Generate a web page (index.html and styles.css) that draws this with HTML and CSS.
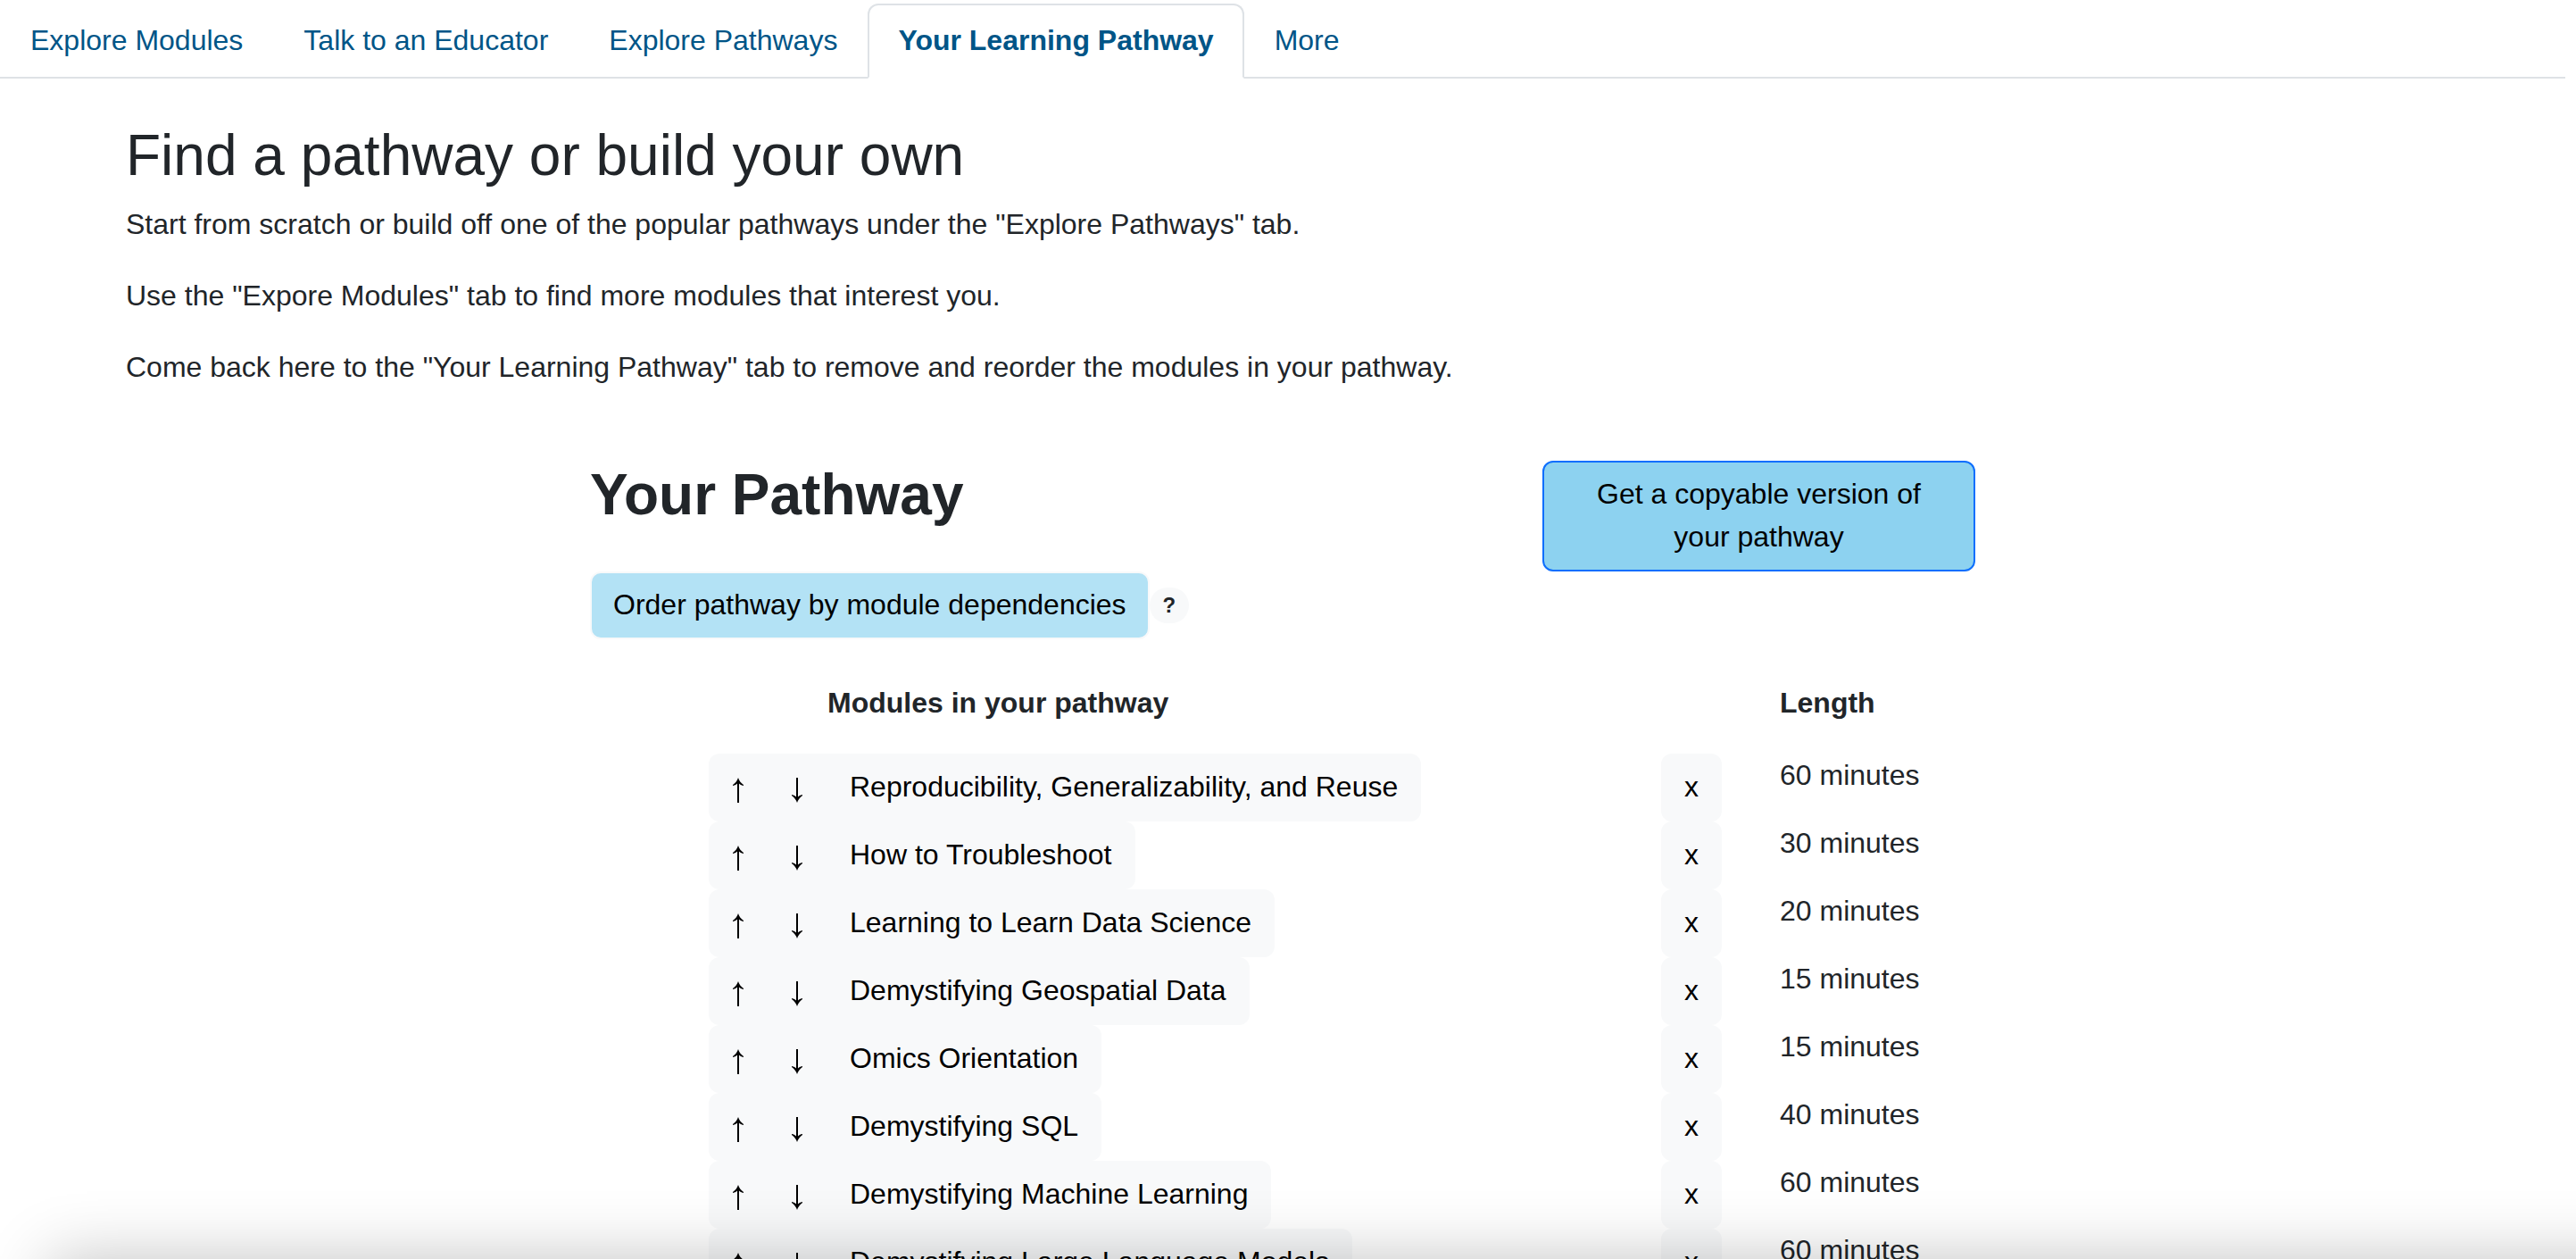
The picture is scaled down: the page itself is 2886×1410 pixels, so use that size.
FILE: index.html
```html
<!DOCTYPE html>
<html lang="en">
<head>
<meta charset="utf-8">
<meta name="viewport" content="width=device-width, initial-scale=1">
<title>Your Learning Pathway</title>
<link rel="stylesheet" href="styles.css">
</head>
<body>
<svg class="sprite" aria-hidden="true">
  <symbol id="up" viewBox="0 0 14 28"><path d="M7 0C6 3 4 6 1 8V9C3.500 8.500 5 7.500 6 6.500V28H8V6.500C9 7.500 10.500 8.500 13 9V8C10 6 8 3 7 0Z"/></symbol>
  <symbol id="down" viewBox="0 0 14 28"><path d="M7 28C6 25 4 22 1 20V19C3.500 19.500 5 20.500 6 21.500V0H8V21.500C9 20.500 10.500 19.500 13 19V20C10 22 8 25 7 28Z"/></symbol>
</svg>
<nav class="tabs">
  <a class="tab" href="#modules">Explore Modules</a>
  <a class="tab" href="#educator">Talk to an Educator</a>
  <a class="tab" href="#pathways">Explore Pathways</a>
  <a class="tab tab-active" href="#pathway" aria-current="page">Your Learning Pathway</a>
  <a class="tab" href="#more">More</a>
</nav>
<main class="page">
  <section class="intro">
    <h2 class="title">Find a pathway or build your own</h2>
    <p>Start from scratch or build off one of the popular pathways under the "Explore Pathways" tab.</p>
    <p>Use the "Expore Modules" tab to find more modules that interest you.</p>
    <p>Come back here to the "Your Learning Pathway" tab to remove and reorder the modules in your pathway.</p>
  </section>
  <section class="pathway" id="pathway">
    <div class="pathway-head">
      <h1 class="title title-bold">Your Pathway</h1>
      <button class="btn btn-copy" type="button">Get a copyable version of your pathway</button>
    </div>
    <div class="order">
      <button class="btn btn-order" type="button">Order pathway by module dependencies</button>
      <span class="badge">?</span>
    </div>
    <table class="modules">
      <colgroup><col class="col-name"><col class="col-remove"><col></colgroup>
      <thead>
        <tr><th class="th-name" scope="col">Modules in your pathway</th><td></td><th scope="col">Length</th></tr>
      </thead>
      <tbody>
        <tr>
          <td><div class="module"><button class="btn btn-arrow" type="button" aria-label="Move up"><svg class="arrow"><use href="#up"/></svg></button><button class="btn btn-arrow" type="button" aria-label="Move down"><svg class="arrow"><use href="#down"/></svg></button><button class="btn" type="button">Reproducibility, Generalizability, and Reuse</button></div></td>
          <td><button class="btn" type="button">x</button></td>
          <td>60 minutes</td>
        </tr>
        <tr>
          <td><div class="module"><button class="btn btn-arrow" type="button" aria-label="Move up"><svg class="arrow"><use href="#up"/></svg></button><button class="btn btn-arrow" type="button" aria-label="Move down"><svg class="arrow"><use href="#down"/></svg></button><button class="btn" type="button">How to Troubleshoot</button></div></td>
          <td><button class="btn" type="button">x</button></td>
          <td>30 minutes</td>
        </tr>
        <tr>
          <td><div class="module"><button class="btn btn-arrow" type="button" aria-label="Move up"><svg class="arrow"><use href="#up"/></svg></button><button class="btn btn-arrow" type="button" aria-label="Move down"><svg class="arrow"><use href="#down"/></svg></button><button class="btn" type="button">Learning to Learn Data Science</button></div></td>
          <td><button class="btn" type="button">x</button></td>
          <td>20 minutes</td>
        </tr>
        <tr>
          <td><div class="module"><button class="btn btn-arrow" type="button" aria-label="Move up"><svg class="arrow"><use href="#up"/></svg></button><button class="btn btn-arrow" type="button" aria-label="Move down"><svg class="arrow"><use href="#down"/></svg></button><button class="btn" type="button">Demystifying Geospatial Data</button></div></td>
          <td><button class="btn" type="button">x</button></td>
          <td>15 minutes</td>
        </tr>
        <tr>
          <td><div class="module"><button class="btn btn-arrow" type="button" aria-label="Move up"><svg class="arrow"><use href="#up"/></svg></button><button class="btn btn-arrow" type="button" aria-label="Move down"><svg class="arrow"><use href="#down"/></svg></button><button class="btn" type="button">Omics Orientation</button></div></td>
          <td><button class="btn" type="button">x</button></td>
          <td>15 minutes</td>
        </tr>
        <tr>
          <td><div class="module"><button class="btn btn-arrow" type="button" aria-label="Move up"><svg class="arrow"><use href="#up"/></svg></button><button class="btn btn-arrow" type="button" aria-label="Move down"><svg class="arrow"><use href="#down"/></svg></button><button class="btn" type="button">Demystifying SQL</button></div></td>
          <td><button class="btn" type="button">x</button></td>
          <td>40 minutes</td>
        </tr>
        <tr>
          <td><div class="module"><button class="btn btn-arrow" type="button" aria-label="Move up"><svg class="arrow"><use href="#up"/></svg></button><button class="btn btn-arrow" type="button" aria-label="Move down"><svg class="arrow"><use href="#down"/></svg></button><button class="btn" type="button">Demystifying Machine Learning</button></div></td>
          <td><button class="btn" type="button">x</button></td>
          <td>60 minutes</td>
        </tr>
        <tr>
          <td><div class="module"><button class="btn btn-arrow" type="button" aria-label="Move up"><svg class="arrow"><use href="#up"/></svg></button><button class="btn btn-arrow" type="button" aria-label="Move down"><svg class="arrow"><use href="#down"/></svg></button><button class="btn" type="button">Demystifying Large Language Models</button></div></td>
          <td><button class="btn" type="button">x</button></td>
          <td>60 minutes</td>
        </tr>
      </tbody>
    </table>
  </section>
</main>
<div class="edge-shadow"></div>
</body>
</html>
```

FILE: styles.css
```css
*,
*::before,
*::after {
  box-sizing: border-box;
}

body {
  margin: 0;
  padding: 4px 12px 0 0;
  background: #fff;
  color: #212529;
  font-family: "Liberation Sans", Arial, sans-serif;
  font-size: 32px;
  line-height: 48px;
}

.sprite {
  display: none;
}

/* Tab bar */
.tabs {
  display: flex;
  flex-wrap: wrap;
  border-bottom: 2px solid #dee2e6;
}

.tab {
  margin-bottom: -2px;
  padding: 15px 32px 17px;
  border: 2px solid transparent;
  border-radius: 12px 12px 0 0;
  color: #005587;
  text-decoration: none;
}

.tab-active {
  border-color: #dee2e6 #dee2e6 #fff;
  background: #fff;
  font-weight: 700;
}

/* Page content */
.page {
  max-width: 2640px;
  margin: 0 auto;
  padding: 48px 24px;
}

.title {
  margin: 0 0 15px;
  font-size: 64px;
  line-height: 76px;
}

.intro .title {
  font-weight: 400;
}

.title-bold {
  font-weight: 700;
}

.intro p {
  margin: 0 0 32px;
}

.pathway {
  max-width: 1600px;
  margin: 81px auto 0;
  padding: 0 24px;
}

.pathway-head {
  display: flex;
  align-items: flex-start;
  justify-content: space-between;
}

/* Buttons */
.btn {
  padding: 11px 24px 13px;
  border: 2px solid #f8f9fa;
  border-radius: 12px;
  background: #f8f9fa;
  color: #000;
  font: inherit;
}

.btn-copy {
  width: 485px;
  padding: 11px 48px 13px;
  border-color: #0d6efd;
  background: #8dd2f0;
}

.btn-order {
  background: #b3e2f5;
}

.order {
  display: flex;
  align-items: center;
}

.badge {
  padding: 8px 15px;
  border-radius: 20px;
  background: #f8f9fa;
  font-size: 24px;
  font-weight: 700;
  line-height: 24px;
}

/* Module list */
.modules {
  width: calc(100% - 133px);
  margin: 47px 0 0 133px;
  border-collapse: collapse;
  table-layout: fixed;
}

.modules th,
.modules td {
  padding: 0;
  text-align: left;
  vertical-align: top;
}

.modules thead th {
  padding-bottom: 33px;
}

.modules thead .th-name {
  padding-left: 133px;
}

.col-name {
  width: 1067px;
}

.col-remove {
  width: 133px;
}

.modules td > .btn {
  display: flex;
}

.module {
  display: flex;
  width: fit-content;
  border-radius: 12px;
  background: #f8f9fa;
}

.module .btn {
  border-color: transparent;
  background: none;
}

.module .btn-arrow {
  width: 66px;
  padding: 25px 24px 19px;
}

.arrow {
  display: block;
  width: 14px;
  height: 28px;
}

/* Soft shadow along the bottom of the window */
.edge-shadow {
  position: fixed;
  top: 100%;
  left: 56px;
  right: -200px;
  height: 300px;
  box-shadow: 0 0 70px rgba(0, 0, 0, 0.24);
  pointer-events: none;
}
```
